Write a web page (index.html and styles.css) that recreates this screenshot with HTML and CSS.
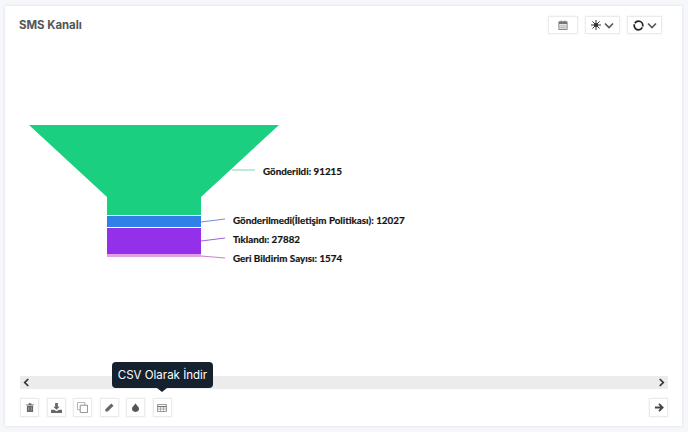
FILE: index.html
```html
<!DOCTYPE html>
<html lang="en">

<head>
    <meta charset="UTF-8">
    <title>SMS Kanalı</title>
    <link rel="stylesheet" href="styles.css">
</head>

<body>
    <div class="card">
        <div class="card-header">
            <h3 class="card-title">SMS Kanalı</h3>
            <div class="header-tools">
                <button class="tool tool-date">
                    <svg width="10" height="10" viewBox="0 0 11 11"><path d="M1 2h9v8.500H1z" fill="none" stroke="#777" stroke-width="1"/><path d="M1 2h9v2.500H1zM3 .5h1v2H3zM7 .5h1v2H7z" fill="#777"/><path d="M1 6.500h9M1 8.500h9M3.500 4.500v6M5.500 4.500v6M7.500 4.500v6" stroke="#999" stroke-width=".6"/></svg>
                </button>
                <button class="tool tool-drop">
                    <svg width="10" height="10" viewBox="0 0 11 11"><path d="M5.500 0v11M0 5.500h11M1.600 1.600l7.800 7.800M9.400 1.600l-7.800 7.800" stroke="#333" stroke-width="1.100"/><circle cx="5.500" cy="5.500" r="2.300" fill="#333"/></svg>
                    <svg class="chev" width="10" height="7" viewBox="0 0 10 7"><path d="M1 1.500l4 4 4-4" fill="none" stroke="#555" stroke-width="1.600"/></svg>
                </button>
                <button class="tool tool-drop">
                    <svg width="11" height="11" viewBox="0 0 11 11"><circle cx="5.500" cy="5.500" r="4.300" fill="none" stroke="#222" stroke-width="1.700" stroke-dasharray="12.500 1" stroke-dashoffset="-2"/></svg>
                    <svg class="chev" width="10" height="7" viewBox="0 0 10 7"><path d="M1 1.500l4 4 4-4" fill="none" stroke="#555" stroke-width="1.600"/></svg>
                </button>
            </div>
        </div>

        <div class="chart">
            <svg class="funnel" width="677" height="340" viewBox="5 37 677 340">
                <polygon points="29,125 279,125 201,197 201,215 107,215 107,197" fill="#1bcf80"/>
                <rect x="107" y="216" width="94" height="11" fill="#2f80e8"/>
                <rect x="107" y="228" width="94" height="26" fill="#9530ea"/>
                <rect x="107" y="254" width="94" height="3" fill="#e2a0e4"/>
                <path d="M232 170H255" stroke="#7fd8b4" fill="none"/>
                <path d="M201 222L225 219" stroke="#6f8fd8" fill="none"/>
                <path d="M201 241L225 238" stroke="#a05fd8" fill="none"/>
                <path d="M201 256L225 258" stroke="#c77fc9" fill="none"/>
                <text class="label" x="263" y="175">Gönderildi: 91215</text>
                <text class="label" x="233" y="224">Gönderilmedi(İletişim Politikası): 12027</text>
                <text class="label" x="233" y="243">Tıklandı: 27882</text>
                <text class="label" x="233" y="262">Geri Bildirim Sayısı: 1574</text>
            </svg>
        </div>

        <div class="scrollbar">
            <svg width="7" height="9" viewBox="0 0 8 10"><path d="M6 1L2 5l4 4" fill="none" stroke="#333" stroke-width="2"/></svg>
            <svg width="7" height="9" viewBox="0 0 8 10"><path d="M2 1l4 4-4 4" fill="none" stroke="#333" stroke-width="2"/></svg>
        </div>

        <div class="toolbar">
            <div class="toolbar-left">
                <button class="tool tool-sq">
                    <svg width="8" height="9" viewBox="0 0 9 10"><path d="M0 1.500h9v1H0zM3 .3h3v1.500H3z" fill="#666"/><path d="M1 3h7v7H1z" fill="#666"/><path d="M3 4.500v4M6 4.500v4" stroke="#bbb" stroke-width=".7"/></svg>
                </button>
                <button class="tool tool-sq">
                    <svg width="11" height="10" viewBox="0 0 12 11"><path d="M4.500 0h3v4h2L6 7.500 2.500 4h2z" fill="#666"/><path d="M0 7.500h3.500L6 9l2.500-1.500H12V11H0z" fill="#666"/></svg>
                </button>
                <button class="tool tool-sq">
                    <svg width="11" height="11" viewBox="0 0 12 12"><path d="M.5.500h8v8h-8z" fill="#fff" stroke="#aaa"/><path d="M3.500 3.500h8v8h-8z" fill="#fff" stroke="#888"/></svg>
                </button>
                <button class="tool tool-sq">
                    <svg width="9" height="9" viewBox="0 0 10 10"><path d="M7 .5l2.500 2.500L3 9.500.5 9.500V7z" fill="#666"/></svg>
                </button>
                <button class="tool tool-sq">
                    <svg width="7" height="9" viewBox="0 0 8 10"><path d="M4 0c1 2.200 4 4 4 6.200A4 3.800 0 0 1 0 6.200C0 4 3 2.200 4 0z" fill="#555"/></svg>
                </button>
                <button class="tool tool-sq">
                    <svg width="10" height="8" viewBox="0 0 12 10"><path d="M.5.500h11v9H.5z" fill="#fff" stroke="#777"/><path d="M.5 3.200h11" stroke="#777" stroke-width="1.500"/><path d="M.5 6.300h11M4.200 3v6.500M7.800 3v6.500" stroke="#888" stroke-width=".8"/></svg>
                </button>
            </div>
            <button class="tool tool-sq">
                <svg width="10" height="9" viewBox="0 0 11 10"><path d="M1 5h8M5.500 1l4 4-4 4" fill="none" stroke="#444" stroke-width="2"/></svg>
            </button>
        </div>

        <div class="tooltip">CSV Olarak İndir</div>
    </div>
</body>

</html>
```

FILE: styles.css
```css
* {
    box-sizing: border-box;
}

body {
    margin: 0;
    height: 432px;
    padding: 6px 6px 6px 5px;
    background: #f5f7fb;
    font-family: "Inter", "Liberation Sans", sans-serif;
    overflow: hidden;
}

.card {
    position: relative;
    height: 420px;
    display: flex;
    flex-direction: column;
    background: white;
    box-shadow: 0px 0px 3px rgba(120, 130, 160, 0.2);
}

.card-header {
    height: 31px;
    padding: 10px 20px 0 14px;
    display: flex;
    justify-content: space-between;
    align-items: flex-start;
}

.card-title {
    margin: 2px 0 0 0;
    font-family: "Inter", sans-serif;
    font-size: 11.400px;
    font-weight: 700;
    color: #555;
}

.header-tools {
    display: flex;
    gap: 7px;
}

.tool {
    display: flex;
    align-items: center;
    justify-content: center;
    padding: 0;
    background: white;
    border: 1px solid #ebebeb;
    box-shadow: 0px 0px 2px rgba(0, 0, 0, 0.08);
}

.tool-date {
    width: 30px;
    height: 18px;
}

.tool-drop {
    width: 35px;
    height: 18px;
    gap: 3px;
}

.tool-sq {
    width: 19px;
    height: 19px;
}

.chart {
    flex: 1;
    min-height: 0;
}

.funnel {
    display: block;
}

.label {
    font-family: "Lato", sans-serif;
    font-size: 9.800px;
    font-weight: 700;
    fill: #111;
    stroke: #111;
    stroke-width: 0.2px;
}

.scrollbar {
    height: 13px;
    margin: 0 14px 0 15px;
    padding: 0 3px;
    display: flex;
    justify-content: space-between;
    align-items: center;
    background: #ececec;
}

.toolbar {
    height: 37px;
    padding: 0 14px 0 15px;
    display: flex;
    justify-content: space-between;
    align-items: center;
}

.toolbar-left {
    display: flex;
    gap: 7.500px;
}

.tooltip {
    position: absolute;
    left: 107px;
    top: 356px;
    width: 101px;
    height: 26px;
    line-height: 26px;
    text-align: center;
    border-radius: 4px;
    background: #15212f;
    color: white;
    font-size: 11.500px;
}

.tooltip::after {
    content: "";
    position: absolute;
    left: 45px;
    bottom: -4px;
    border-left: 5px solid transparent;
    border-right: 5px solid transparent;
    border-top: 4px solid #15212f;
}
```
